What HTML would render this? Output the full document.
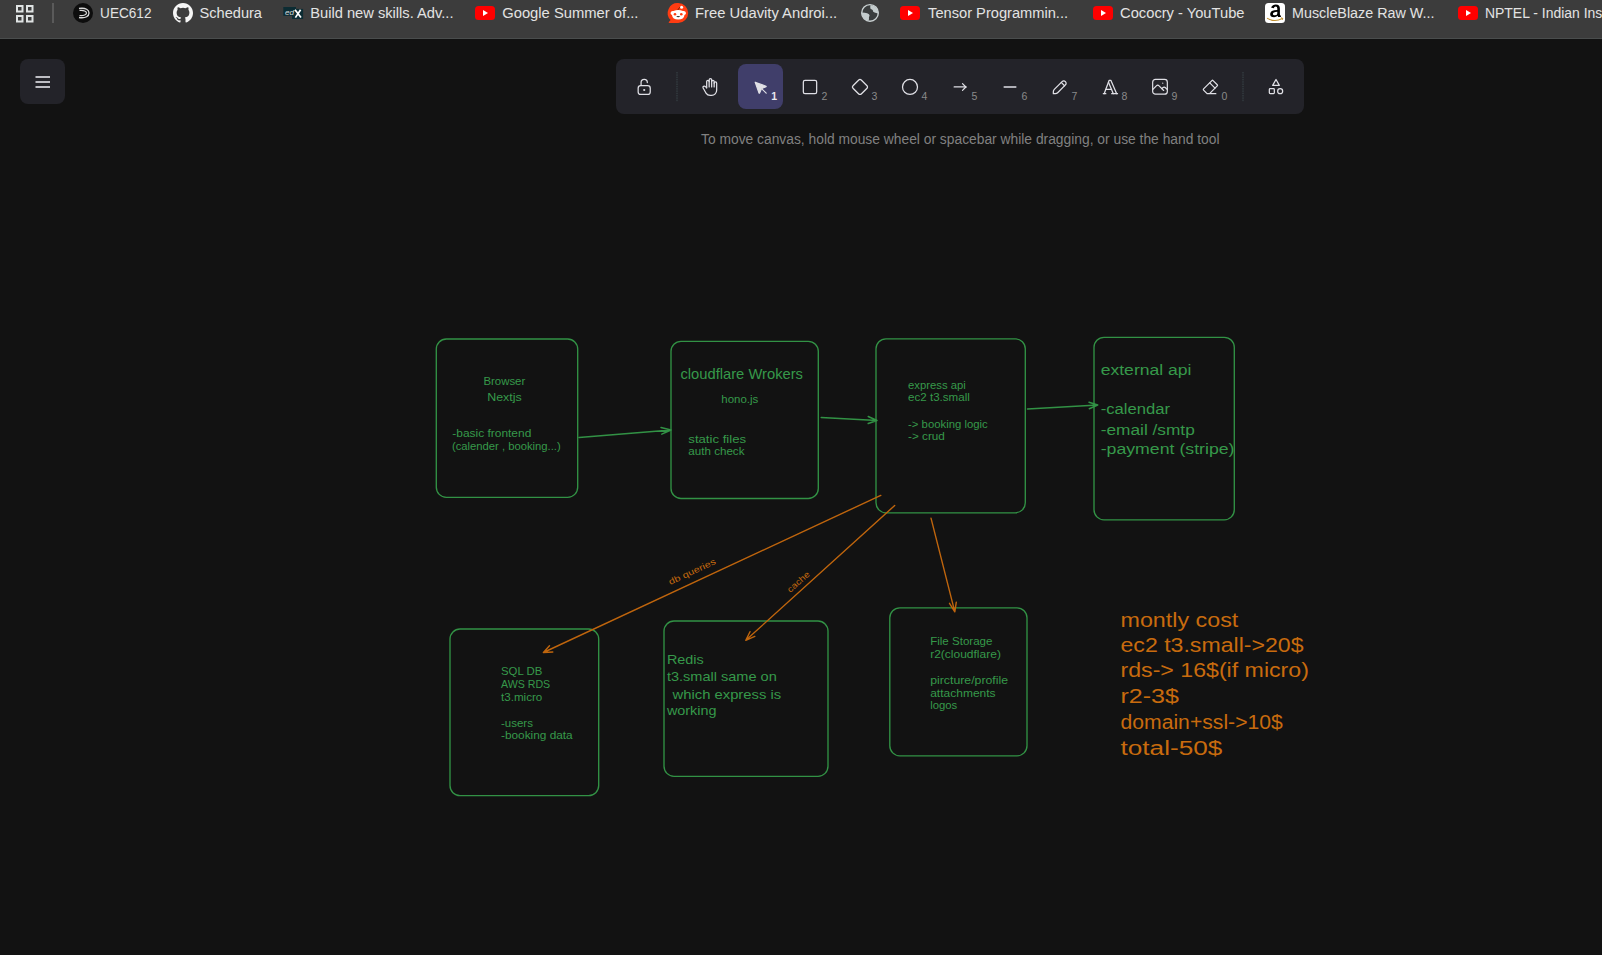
<!DOCTYPE html>
<html><head><meta charset="utf-8"><title>Excalidraw</title>
<style>
html,body{margin:0;padding:0;background:#121212;width:1602px;height:955px;overflow:hidden;}
svg{position:absolute;left:0;top:0;display:block;font-family:"Liberation Sans", sans-serif;}
</style></head><body>
<svg width="1602" height="955" viewBox="0 0 1602 955">
<rect x="0" y="0" width="1602" height="38" fill="#3c3c3c"/>
<rect x="0" y="38" width="1602" height="1" fill="#4a4d4d"/>
<rect x="17" y="6" width="5.5" height="5.5" fill="none" stroke="#dfe3e3" stroke-width="2"/>
<rect x="27" y="6" width="5.5" height="5.5" fill="none" stroke="#dfe3e3" stroke-width="2"/>
<rect x="17" y="16" width="5.5" height="5.5" fill="none" stroke="#dfe3e3" stroke-width="2"/>
<rect x="27" y="16" width="5.5" height="5.5" fill="none" stroke="#dfe3e3" stroke-width="2"/>
<rect x="52" y="3" width="2" height="20" fill="#5a5a5a"/>
<text x="100.1" y="18.2" font-size="15.5" fill="#e3e3e3" textLength="51.4" lengthAdjust="spacingAndGlyphs" >UEC612</text>
<text x="199.5" y="18.2" font-size="15.5" fill="#e3e3e3" textLength="62.5" lengthAdjust="spacingAndGlyphs" >Schedura</text>
<text x="310.2" y="18.2" font-size="15.5" fill="#e3e3e3" textLength="143.3" lengthAdjust="spacingAndGlyphs" >Build new skills. Adv...</text>
<text x="502.2" y="18.2" font-size="15.5" fill="#e3e3e3" textLength="136.3" lengthAdjust="spacingAndGlyphs" >Google Summer of...</text>
<text x="695.0" y="18.2" font-size="15.5" fill="#e3e3e3" textLength="142.2" lengthAdjust="spacingAndGlyphs" >Free Udavity Androi...</text>
<text x="928.1" y="18.2" font-size="15.5" fill="#e3e3e3" textLength="140.0" lengthAdjust="spacingAndGlyphs" >Tensor Programmin...</text>
<text x="1120.1" y="18.2" font-size="15.5" fill="#e3e3e3" textLength="124.4" lengthAdjust="spacingAndGlyphs" >Cococry - YouTube</text>
<text x="1292.0" y="18.2" font-size="15.5" fill="#e3e3e3" textLength="142.5" lengthAdjust="spacingAndGlyphs" >MuscleBlaze Raw W...</text>
<text x="1485" y="18.2" font-size="15.5" fill="#e3e3e3" transform="translate(1485 0) scale(0.9 1) translate(-1485 0)">NPTEL - Indian Institute</text>
<circle cx="83" cy="13" r="10" fill="#0d0d0d"/>
<path d="M79 8.5 C86 7.5 89 10 89 13 C89 16 86 18.5 79 17.5" fill="none" stroke="#d8d8d8" stroke-width="1.3"/>
<path d="M79.5 10.5 C84 10 86.5 11.5 86.5 13 C86.5 14.5 84 16 79.5 15.5" fill="none" stroke="#d8d8d8" stroke-width="1.2"/>
<g transform="translate(173 3) scale(0.8333)"><path fill="#f5f5f5" d="M12 0C5.37 0 0 5.37 0 12c0 5.3 3.44 9.8 8.2 11.39.6.11.82-.26.82-.58v-2.03c-3.34.73-4.04-1.61-4.04-1.61-.55-1.39-1.33-1.76-1.33-1.76-1.09-.74.08-.73.08-.73 1.2.09 1.84 1.24 1.84 1.24 1.07 1.84 2.81 1.31 3.5 1 .11-.78.42-1.31.76-1.61-2.67-.3-5.47-1.33-5.47-5.93 0-1.31.47-2.38 1.24-3.22-.12-.3-.54-1.52.12-3.18 0 0 1-.32 3.3 1.23a11.5 11.5 0 0 1 6 0c2.28-1.55 3.29-1.23 3.29-1.23.66 1.66.24 2.88.12 3.18.77.84 1.23 1.91 1.23 3.22 0 4.61-2.8 5.62-5.48 5.92.43.37.82 1.1.82 2.22v3.29c0 .32.21.7.82.58C20.56 21.8 24 17.3 24 12 24 5.37 18.63 0 12 0z"/></g>
<rect x="283.3" y="7" width="12.7" height="8.8" fill="#0c2c33"/>
<rect x="292" y="8.9" width="11.1" height="10.1" fill="#0c2c33"/>
<text x="285" y="14.6" font-size="8" font-style="italic" fill="#d8dcdc" textLength="9" lengthAdjust="spacingAndGlyphs">ed</text>
<path d="M295 9.8 L301 17.6 M300.6 9.8 L295.4 17.6" stroke="#ffffff" stroke-width="1.7"/>
<rect x="475" y="6" width="20" height="14" rx="3.5" fill="#ff0000"/>
<path d="M483 10 L488 13 L483 16 Z" fill="#ffffff"/>
<rect x="900" y="6" width="20" height="14" rx="3.5" fill="#ff0000"/>
<path d="M908 10 L913 13 L908 16 Z" fill="#ffffff"/>
<rect x="1093" y="6" width="20" height="14" rx="3.5" fill="#ff0000"/>
<path d="M1101 10 L1106 13 L1101 16 Z" fill="#ffffff"/>
<rect x="1458" y="6" width="20" height="14" rx="3.5" fill="#ff0000"/>
<path d="M1466 10 L1471 13 L1466 16 Z" fill="#ffffff"/>
<path d="M678.2 3 A10 10 0 0 1 678.2 23 L669.5 23 Q668 23 669 21.8 L670.6 20 A10 10 0 0 1 678.2 3 Z" fill="#ff3c12"/>
<path d="M670.5 13 Q671 10.5 673.5 11 Q676 10 678.2 10 Q680.5 10 683 11 Q685.5 10.5 686 13 Q686 14.5 684.5 15 Q684 19.5 678.2 19.5 Q672.5 19.5 672 15 Q670.5 14.5 670.5 13 Z" fill="#ffffff"/>
<circle cx="675" cy="14.2" r="1.3" fill="#ff3c12"/><circle cx="681.3" cy="14.2" r="1.3" fill="#ff3c12"/>
<path d="M676.2 16.2 Q678.2 18.2 680.2 16.2 Z" fill="#000"/>
<circle cx="681.6" cy="7.2" r="1.5" fill="#ffffff"/>
<path d="M677.8 10 L679.8 7.2" stroke="#3a1a00" stroke-width="0.7"/>
<circle cx="870" cy="12.9" r="8.3" fill="#3a3d3e" stroke="#c9d0d1" stroke-width="1.4"/>
<path d="M870.6 5 Q876.5 5.6 878.3 11.5 L878 13.6 Q876 13.2 874.6 12.6 Q872.6 11.8 872.9 10.4 Q872.3 9.2 870.6 9 Q869.8 7 870.6 5 Z" fill="#c4cccd"/>
<path d="M861.8 12.4 Q865 12.6 867.2 13.3 Q869.6 14 869.6 15.6 Q868.6 17.2 869 19.6 L868 20.8 Q863.6 19.8 862 15.2 Z" fill="#c4cccd"/>
<rect x="1265" y="3" width="20" height="20" rx="3.5" fill="#ffffff"/>
<path fill-rule="evenodd" fill="#000" d="M1271 7.6 Q1272.6 4.4 1275.8 4.4 Q1279.9 4.4 1279.9 8.6 L1279.9 14.3 Q1279.9 15.6 1280.9 15.8 L1280.9 16.9 L1278.1 16.9 L1277.6 15.8 Q1276.2 17.2 1274.1 17.2 Q1270.1 17.2 1270.1 13.9 Q1270.1 10.4 1277.3 10.1 L1277.3 8.4 Q1277.3 6.4 1275.7 6.4 Q1274.2 6.4 1273.7 8.2 Z M1277.3 11.7 Q1272.9 12 1272.9 13.9 Q1272.9 15.3 1274.5 15.3 Q1277.3 15.3 1277.3 13.4 Z"/>
<path d="M1267.5 18.4 Q1274.5 22.6 1282.3 18.6" fill="none" stroke="#c09030" stroke-width="1.1" stroke-linecap="round"/>
<path d="M1281 17.6 L1282.8 18.4 L1282.2 20" fill="none" stroke="#c09030" stroke-width="0.9"/>
<rect x="20" y="59" width="45" height="45" rx="8" fill="#232329"/>
<rect x="35.5" y="76.1" width="14.5" height="1.8" fill="#cfcfd4"/>
<rect x="35.5" y="81.1" width="14.5" height="1.8" fill="#cfcfd4"/>
<rect x="35.5" y="86.1" width="14.5" height="1.8" fill="#cfcfd4"/>
<rect x="616" y="59" width="688" height="55" rx="8" fill="#232329"/>
<rect x="738" y="64" width="45" height="45" rx="8" fill="#403e6a"/>
<line x1="677" y1="72" x2="677" y2="102" stroke="#3a464b" stroke-width="1" stroke-dasharray="1.5 0.8"/>
<line x1="1243" y1="72" x2="1243" y2="102" stroke="#3a464b" stroke-width="1" stroke-dasharray="1.5 0.8"/>
<g transform="translate(634.20 77.10) scale(1.0000)" fill="none" stroke="#e0e0e6" stroke-width="1.25" stroke-linecap="round" stroke-linejoin="round"><path d="M13.542 8.542H6.458a2.5 2.5 0 0 0-2.5 2.5v3.75a2.5 2.5 0 0 0 2.5 2.5h7.084a2.5 2.5 0 0 0 2.5-2.5v-3.75a2.5 2.5 0 0 0-2.5-2.5Z"/><circle cx="10" cy="12.9" r="1.1" fill="#e0e0e6" stroke="none"/><path d="M6.877 8.333V5.417a3.125 3.125 0 0 1 6.25 0"/></g>
<g transform="translate(700.00 77.00) scale(0.8333)" fill="none" stroke="#e0e0e6" stroke-width="1.5" stroke-linecap="round" stroke-linejoin="round" ><path d="M8 13v-7.5a1.5 1.5 0 0 1 3 0v6.5"/><path d="M11 5.5v-2a1.5 1.5 0 1 1 3 0v8.5"/><path d="M14 5.5a1.5 1.5 0 0 1 3 0v6.5"/><path d="M17 7.5a1.5 1.5 0 0 1 3 0v8.5a6 6 0 0 1 -6 6h-2h.208a6 6 0 0 1 -5.012 -2.7a69.74 69.74 0 0 1 -.196 -.3c-.312 -.479 -1.407 -2.388 -3.286 -5.728a1.5 1.5 0 0 1 .536 -2.022a1.867 1.867 0 0 1 2.28 .28l1.47 1.47"/></g>
<g transform="translate(749.7 76.7) scale(0.9167)" fill="#e0e0e6" stroke="#e0e0e6" stroke-width="1.25" stroke-linecap="round" stroke-linejoin="round"><path d="M6 6l4.153 11.793a0.365 .365 0 0 0 .331 .207a0.366 .366 0 0 0 .332 -.207l2.184 -4.793l4.787 -1.994a0.355 .355 0 0 0 .213 -.323a0.355 .355 0 0 0 -.213 -.323l-11.787 -4.36z"/><path d="M13.5 13.5l4.5 4.5"/></g>
<g transform="translate(800.00 77.00) scale(0.8333)" fill="none" stroke="#e0e0e6" stroke-width="1.5" stroke-linecap="round" stroke-linejoin="round" ><rect x="4" y="4" width="16" height="16" rx="2"/></g>
<g transform="translate(850.00 77.00) scale(0.8333)" fill="none" stroke="#e0e0e6" stroke-width="1.5" stroke-linecap="round" stroke-linejoin="round" ><path d="M10.5 20.4l-6.9 -6.9c-.781 -.781 -.781 -2.219 0 -3l6.9 -6.9c.781 -.781 2.219 -.781 3 0l6.9 6.9c.781 .781 .781 2.219 0 3l-6.9 6.9c-.781 .781 -2.219 .781 -3 0z"/></g>
<g transform="translate(900.00 77.00) scale(0.8333)" fill="none" stroke="#e0e0e6" stroke-width="1.5" stroke-linecap="round" stroke-linejoin="round" ><circle cx="12" cy="12" r="9"/></g>
<g transform="translate(950.00 77.00) scale(0.8333)" fill="none" stroke="#e0e0e6" stroke-width="1.5" stroke-linecap="round" stroke-linejoin="round" ><line x1="5" y1="12" x2="19" y2="12"/><line x1="15" y1="16" x2="19" y2="12"/><line x1="15" y1="8" x2="19" y2="12"/></g>
<g transform="translate(1000.00 77.00) scale(1.0000)" fill="none" stroke="#e0e0e6" stroke-width="1.5" stroke-linecap="round" stroke-linejoin="round"><path d="M4.167 10h11.666"/></g>
<g transform="translate(1050.00 77.00) scale(1.0000)" fill="none" stroke="#e0e0e6" stroke-width="1.25" stroke-linecap="round" stroke-linejoin="round"><path d="m7.643 15.69 7.774-7.773a2.357 2.357 0 1 0-3.334-3.334L4.31 12.357a3.333 3.333 0 0 0-.977 2.357v1.953h1.953c.884 0 1.732-.352 2.357-.977Z"/><path d="m11.25 5.417 3.333 3.333"/></g>
<g transform="translate(1100.00 77.00) scale(0.8333)" fill="none" stroke="#e0e0e6" stroke-width="1.5" stroke-linecap="round" stroke-linejoin="round" ><line x1="4" y1="20" x2="7" y2="20"/><line x1="14" y1="20" x2="21" y2="20"/><line x1="6.9" y1="15" x2="13.8" y2="15"/><line x1="10.2" y1="6.3" x2="16" y2="20"/><polyline points="5 20 11 4 13 4 20 20"/></g>
<g transform="translate(1149.00 75.80) scale(0.9167)" fill="none" stroke="#e0e0e6" stroke-width="1.3" stroke-linecap="round" stroke-linejoin="round" ><line x1="15" y1="8" x2="15.01" y2="8"/><rect x="4" y="4" width="16" height="16" rx="3"/><path d="M4 15l4 -4a3 5 0 0 1 3 0l5 5"/><path d="M14 14l1 -1a3 5 0 0 1 3 0l2 2"/></g>
<g transform="translate(1200.00 77.00) scale(0.8333)" fill="none" stroke="#e0e0e6" stroke-width="1.5" stroke-linecap="round" stroke-linejoin="round" ><path d="M19 20h-10.5l-4.21 -4.3a1 1 0 0 1 0 -1.41l10 -10a1 1 0 0 1 1.41 0l5 5a1 1 0 0 1 0 1.41l-9.2 9.3"/><path d="M18 13.3l-6.3 -6.3"/></g>
<g transform="translate(1266.00 77.00) scale(0.8333)" fill="none" stroke="#e0e0e6" stroke-width="1.5" stroke-linecap="round" stroke-linejoin="round" ><path d="M12 3l-4 7h8z"/><path d="M17 17m-3 0a3 3 0 1 0 6 0a3 3 0 1 0 -6 0"/><path d="M4 14m0 1a1 1 0 0 1 1 -1h4a1 1 0 0 1 1 1v4a1 1 0 0 1 -1 1h-4a1 1 0 0 1 -1 -1z"/></g>
<text x="821.5" y="100" font-size="10.5" fill="#8a8a8a">2</text>
<text x="871.5" y="100" font-size="10.5" fill="#8a8a8a">3</text>
<text x="921.5" y="100" font-size="10.5" fill="#8a8a8a">4</text>
<text x="971.5" y="100" font-size="10.5" fill="#8a8a8a">5</text>
<text x="1021.5" y="100" font-size="10.5" fill="#8a8a8a">6</text>
<text x="1071.5" y="100" font-size="10.5" fill="#8a8a8a">7</text>
<text x="1121.5" y="100" font-size="10.5" fill="#8a8a8a">8</text>
<text x="1171.5" y="100" font-size="10.5" fill="#8a8a8a">9</text>
<text x="1221.5" y="100" font-size="10.5" fill="#8a8a8a">0</text>
<text x="771.2" y="100" font-size="10.5" font-weight="bold" fill="#e8e8ef">1</text>
<text x="701.0" y="143.7" font-size="14" fill="#818181" textLength="518.5" lengthAdjust="spacingAndGlyphs" >To move canvas, hold mouse wheel or spacebar while dragging, or use the hand tool</text>
<rect x="436.3" y="339" width="141.40000000000003" height="158.3" rx="10" fill="none" stroke="#329245" stroke-width="1.35"/>
<rect x="671" y="341.3" width="147.29999999999995" height="157.2" rx="10" fill="none" stroke="#329245" stroke-width="1.35"/>
<rect x="876" y="338.8" width="149.29999999999995" height="173.99999999999994" rx="10" fill="none" stroke="#329245" stroke-width="1.35"/>
<rect x="1094" y="337.3" width="140.29999999999995" height="182.49999999999994" rx="10" fill="none" stroke="#329245" stroke-width="1.35"/>
<rect x="450" y="629" width="148.70000000000005" height="166.60000000000002" rx="10" fill="none" stroke="#329245" stroke-width="1.35"/>
<rect x="664" y="621" width="164" height="155.29999999999995" rx="10" fill="none" stroke="#329245" stroke-width="1.35"/>
<rect x="889.8" y="607.8" width="137.20000000000005" height="148.0" rx="10" fill="none" stroke="#329245" stroke-width="1.35"/>
<path d="M579 437.5 L671 430 M661 427.4 L671 430 L661.8 434.1" fill="none" stroke="#329245" stroke-width="1.5" stroke-linecap="round" stroke-linejoin="round"/>
<path d="M821.2 417.5 L877 420.5 M868.2 416.5 L877 420.5 L868.2 423.5" fill="none" stroke="#329245" stroke-width="1.5" stroke-linecap="round" stroke-linejoin="round"/>
<path d="M1027.5 409 L1097.7 405 M1089 402.2 L1097.7 405 L1089.3 408.7" fill="none" stroke="#329245" stroke-width="1.5" stroke-linecap="round" stroke-linejoin="round"/>
<path d="M880.8 495.4 L543.4 652.5 M549.5 645.7 L543.4 652.5 L552.8 652" fill="none" stroke="#bf650d" stroke-width="1.4" stroke-linecap="round" stroke-linejoin="round"/>
<path d="M894.7 505.5 L745.8 640.3 M750 631.7 L745.8 640.3 L754.8 636.4" fill="none" stroke="#bf650d" stroke-width="1.4" stroke-linecap="round" stroke-linejoin="round"/>
<path d="M931 518.2 L954.8 611.8 M949.5 603.3 L954.8 611.8 L956.3 602.2" fill="none" stroke="#bf650d" stroke-width="1.4" stroke-linecap="round" stroke-linejoin="round"/>
<text x="0" y="0" font-size="8.5" fill="#c86b0e" textLength="51" lengthAdjust="spacingAndGlyphs" transform="translate(670.2 585.1) rotate(-25)">db queries</text>
<text x="0" y="0" font-size="8.5" fill="#c86b0e" textLength="27" lengthAdjust="spacingAndGlyphs" transform="translate(790.3 593) rotate(-42)">cache</text>
<text x="483.4" y="384.7" font-size="10.1" fill="#36994a" textLength="41.9" lengthAdjust="spacingAndGlyphs" >Browser</text>
<text x="487.2" y="400.7" font-size="10.1" fill="#36994a" textLength="34.5" lengthAdjust="spacingAndGlyphs" >Nextjs</text>
<text x="452.3" y="437.0" font-size="10.1" fill="#36994a" textLength="79.0" lengthAdjust="spacingAndGlyphs" >-basic frontend</text>
<text x="451.9" y="450.0" font-size="10.1" fill="#36994a" textLength="108.8" lengthAdjust="spacingAndGlyphs" >(calender , booking...)</text>
<text x="680.4" y="378.6" font-size="14.6" fill="#36994a" textLength="122.6" lengthAdjust="spacingAndGlyphs" >cloudflare Wrokers</text>
<text x="721.3" y="402.6" font-size="10.1" fill="#36994a" textLength="37.0" lengthAdjust="spacingAndGlyphs" >hono.js</text>
<text x="688.3" y="442.7" font-size="10.1" fill="#36994a" textLength="57.8" lengthAdjust="spacingAndGlyphs" >static files</text>
<text x="688.3" y="455.3" font-size="10.1" fill="#36994a" textLength="56.2" lengthAdjust="spacingAndGlyphs" >auth check</text>
<text x="908.1" y="389.3" font-size="10.1" fill="#36994a" textLength="57.7" lengthAdjust="spacingAndGlyphs" >express api</text>
<text x="908.1" y="401.3" font-size="10.1" fill="#36994a" textLength="61.7" lengthAdjust="spacingAndGlyphs" >ec2 t3.small</text>
<text x="908.1" y="427.5" font-size="10.1" fill="#36994a" textLength="79.6" lengthAdjust="spacingAndGlyphs" >-&gt; booking logic</text>
<text x="908.1" y="440.0" font-size="10.1" fill="#36994a" textLength="36.8" lengthAdjust="spacingAndGlyphs" >-&gt; crud</text>
<text x="1100.7" y="374.8" font-size="15.1" fill="#36994a" textLength="90.8" lengthAdjust="spacingAndGlyphs" >external api</text>
<text x="1100.7" y="414.0" font-size="15.1" fill="#36994a" textLength="69.4" lengthAdjust="spacingAndGlyphs" >-calendar</text>
<text x="1100.7" y="434.5" font-size="15.1" fill="#36994a" textLength="94.1" lengthAdjust="spacingAndGlyphs" >-email /smtp</text>
<text x="1100.7" y="453.8" font-size="15.1" fill="#36994a" textLength="133.8" lengthAdjust="spacingAndGlyphs" >-payment (stripe)</text>
<text x="501.0" y="674.7" font-size="10.1" fill="#36994a" textLength="41.3" lengthAdjust="spacingAndGlyphs" >SQL DB</text>
<text x="501.0" y="687.6" font-size="10.1" fill="#36994a" textLength="49.2" lengthAdjust="spacingAndGlyphs" >AWS RDS</text>
<text x="501.0" y="700.6" font-size="10.1" fill="#36994a" textLength="41.3" lengthAdjust="spacingAndGlyphs" >t3.micro</text>
<text x="501.0" y="726.9" font-size="10.1" fill="#36994a" textLength="31.9" lengthAdjust="spacingAndGlyphs" >-users</text>
<text x="501.0" y="739.4" font-size="10.1" fill="#36994a" textLength="71.7" lengthAdjust="spacingAndGlyphs" >-booking data</text>
<text x="666.9" y="663.7" font-size="13.2" fill="#36994a" textLength="36.8" lengthAdjust="spacingAndGlyphs" >Redis</text>
<text x="666.9" y="680.6" font-size="13.2" fill="#36994a" textLength="109.9" lengthAdjust="spacingAndGlyphs" >t3.small same on</text>
<text x="672.6" y="698.5" font-size="13.2" fill="#36994a" textLength="108.5" lengthAdjust="spacingAndGlyphs" >which express is</text>
<text x="666.9" y="715.0" font-size="13.2" fill="#36994a" textLength="49.6" lengthAdjust="spacingAndGlyphs" >working</text>
<text x="930.2" y="644.7" font-size="10.1" fill="#36994a" textLength="62.2" lengthAdjust="spacingAndGlyphs" >File Storage</text>
<text x="930.2" y="657.5" font-size="10.1" fill="#36994a" textLength="70.7" lengthAdjust="spacingAndGlyphs" >r2(cloudflare)</text>
<text x="930.2" y="683.7" font-size="10.1" fill="#36994a" textLength="77.9" lengthAdjust="spacingAndGlyphs" >pircture/profile</text>
<text x="930.2" y="696.5" font-size="10.1" fill="#36994a" textLength="65.4" lengthAdjust="spacingAndGlyphs" >attachments</text>
<text x="930.2" y="709.1" font-size="10.1" fill="#36994a" textLength="27.0" lengthAdjust="spacingAndGlyphs" >logos</text>
<text x="1120.5" y="626.7" font-size="20" fill="#c86b0e" textLength="117.8" lengthAdjust="spacingAndGlyphs" >montly cost</text>
<text x="1120.5" y="651.6" font-size="20" fill="#c86b0e" textLength="183.0" lengthAdjust="spacingAndGlyphs" >ec2 t3.small-&gt;20$</text>
<text x="1120.5" y="677.4" font-size="20" fill="#c86b0e" textLength="188.4" lengthAdjust="spacingAndGlyphs" >rds-&gt; 16$(if micro)</text>
<text x="1120.5" y="703.2" font-size="20" fill="#c86b0e" textLength="58.5" lengthAdjust="spacingAndGlyphs" >r2-3$</text>
<text x="1120.5" y="729.0" font-size="20" fill="#c86b0e" textLength="162.3" lengthAdjust="spacingAndGlyphs" >domain+ssl-&gt;10$</text>
<text x="1120.5" y="754.8" font-size="20" fill="#c86b0e" textLength="101.8" lengthAdjust="spacingAndGlyphs" >total-50$</text>
</svg>
</body></html>
